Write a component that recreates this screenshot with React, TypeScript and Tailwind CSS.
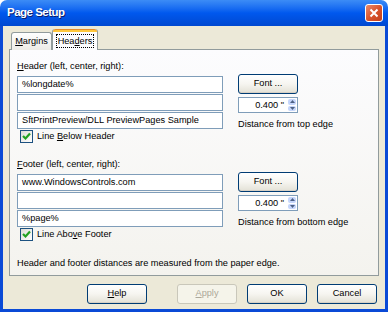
import React from "react";

const font = { fontFamily: "'Liberation Sans', Arial, sans-serif" };

function TextBox({ value }: { value?: string }) {
  return (
    <div className="h-[17px] w-full overflow-hidden whitespace-nowrap border border-[#7f9db9] bg-white px-[4px] text-[9.2px] leading-[15px] text-black">
      {value}
    </div>
  );
}

function XpButton({ children, disabled }: { children: React.ReactNode; disabled?: boolean }) {
  return (
    <div
      className={
        disabled
          ? "flex h-[20px] w-[60px] items-center justify-center rounded-[3px] border border-[#c9c7ba] bg-[#f5f4ea] text-[9.2px] text-[#aca899]"
          : "flex h-[20px] w-[60px] items-center justify-center rounded-[3px] border border-[#003c74] bg-gradient-to-b from-white via-[#f6f5f0] to-[#e3e1d6] text-[9.2px] text-black shadow-[inset_0_-1px_0_#d6d0c5]"
      }
    >
      {children}
    </div>
  );
}

function Check({ children }: { children: React.ReactNode }) {
  return (
    <div className="flex items-center gap-[4px] text-[9.2px] leading-[13px]">
      <div className="flex h-[13px] w-[13px] items-center justify-center border border-[#1c5180] bg-gradient-to-br from-[#dcdcd7] to-white">
        <svg width="9" height="9" viewBox="0 0 9 9">
          <path d="M1 4 L3.5 6.5 L8 1.5" stroke="#21a121" strokeWidth="2.2" fill="none" />
        </svg>
      </div>
      <span>{children}</span>
    </div>
  );
}

function Spin() {
  return (
    <div className="flex h-[16px] w-[60px] border border-[#7f9db9] bg-white">
      <div className="flex-1 pr-[3px] text-right text-[9.2px] leading-[14px]">0.400 "</div>
      <div className="flex w-[10px] flex-col gap-px p-px">
        <div className="flex flex-1 items-center justify-center rounded-[2px] bg-[#c6d6fb]">
          <svg width="5" height="3" viewBox="0 0 5 3">
            <path d="M0 3 L2.5 0 L5 3 Z" fill="#4d6185" />
          </svg>
        </div>
        <div className="flex flex-1 items-center justify-center rounded-[2px] bg-[#c6d6fb]">
          <svg width="5" height="3" viewBox="0 0 5 3">
            <path d="M0 0 L2.5 3 L5 0 Z" fill="#4d6185" />
          </svg>
        </div>
      </div>
    </div>
  );
}

function Section({
  label,
  mnemonic,
  values,
  check,
  distance,
}: {
  label: string;
  mnemonic: string;
  values: string[];
  check: React.ReactNode;
  distance: string;
}) {
  return (
    <div className="flex gap-[15px]">
      <div className="flex w-[206px] flex-col">
        <div className="h-[13px] text-[9.2px] leading-[13px]">
          <span className="underline">{mnemonic}</span>
          {label}
        </div>
        <div className="mt-[3px] flex flex-col gap-px">
          {values.map((v, i) => (
            <TextBox key={i} value={v} />
          ))}
        </div>
        <div className="mt-[1px] pl-[3px]">{check}</div>
      </div>
      <div className="flex flex-col pt-[14px]">
        <XpButton>Font ...</XpButton>
        <div className="mt-[3px]">
          <Spin />
        </div>
        <div className="mt-[5px] text-[9.2px] leading-[13px]">{distance}</div>
      </div>
    </div>
  );
}

export default function App() {
  return (
    <div className="h-[312px] w-[388px] overflow-hidden bg-white" style={font}>
      <div className="flex h-full flex-col">
        {/* title bar */}
        <div className="flex h-[26px] items-center justify-between rounded-t-[7px] bg-gradient-to-b from-[#3c8cf6] via-[#0058ee] to-[#0048d0] pl-[7px] pr-[5px]">
          <span className="text-[11.5px] font-bold tracking-[-0.5px] text-white [text-shadow:1px_1px_0_#0a1e6e]">Page Setup</span>
          <div className="flex h-[18px] w-[18px] items-center justify-center rounded-[3px] border border-white bg-gradient-to-br from-[#e9896a] via-[#d9542c] to-[#c2401c]">
            <svg width="10" height="10" viewBox="0 0 10 10">
              <path d="M1.5 1.5 L8.5 8.5 M8.5 1.5 L1.5 8.5" stroke="white" strokeWidth="2" />
            </svg>
          </div>
        </div>
        {/* body */}
        <div className="flex flex-1 flex-col border-x-[3px] border-b-[3px] border-[#0a4ad6] bg-[#ece9d8] px-[6px] pt-[3px] text-black">
          {/* tabs */}
          <div className="relative z-10 flex h-[20px] items-end pl-[2px]">
            <div className="-mb-px flex h-[18px] w-[41px] items-center justify-center rounded-t-[3px] border border-b-0 border-[#919b9c] bg-gradient-to-b from-white to-[#ecebe6] text-[9.2px]">
              <span>
                <span className="underline">M</span>argins
              </span>
            </div>
            <div className="-mb-px flex h-[21px] w-[46px] flex-col rounded-t-[3px] border-x border-[#919b9c] bg-[#fcfcfe]">
              <div className="h-[3px] rounded-t-[3px] border-t border-[#e68b2c] bg-[#ffc83c]" />
              <div className="flex flex-1 items-center justify-center">
                <span className="border border-dotted border-black px-px text-[9.2px] leading-[12px]">
                  Hea<span className="underline">d</span>ers
                </span>
              </div>
            </div>
          </div>
          {/* panel */}
          <div className="flex h-[227px] flex-col border border-[#919b9c] bg-gradient-to-b from-[#fcfcfe] to-[#f4f3ee] pl-[7px] pt-[10px]">
            <Section
              mnemonic="H"
              label="eader (left, center, right):"
              values={["%longdate%", "", "SftPrintPreview/DLL PreviewPages Sample"]}
              check={
                <Check>
                  Line <span className="underline">B</span>elow Header
                </Check>
              }
              distance="Distance from top edge"
            />
            <div className="mt-[15px]">
              <Section
                mnemonic="F"
                label="ooter (left, center, right):"
                values={["www.WindowsControls.com", "", "%page%"]}
                check={
                  <Check>
                    Line Abo<span className="underline">v</span>e Footer
                  </Check>
                }
                distance="Distance from bottom edge"
              />
            </div>
            <div className="mt-[16px] text-[9.2px] leading-[13px]">
              Header and footer distances are measured from the paper edge.
            </div>
          </div>
          {/* buttons */}
          <div className="mt-[8px] flex justify-end gap-[10px] pr-[2px]">
            <div className="mr-[20px]">
              <XpButton>
                <span>
                  <span className="underline">H</span>elp
                </span>
              </XpButton>
            </div>
            <XpButton disabled>
              <span>
                <span className="underline">A</span>pply
              </span>
            </XpButton>
            <XpButton>OK</XpButton>
            <XpButton>Cancel</XpButton>
          </div>
        </div>
      </div>
    </div>
  );
}
